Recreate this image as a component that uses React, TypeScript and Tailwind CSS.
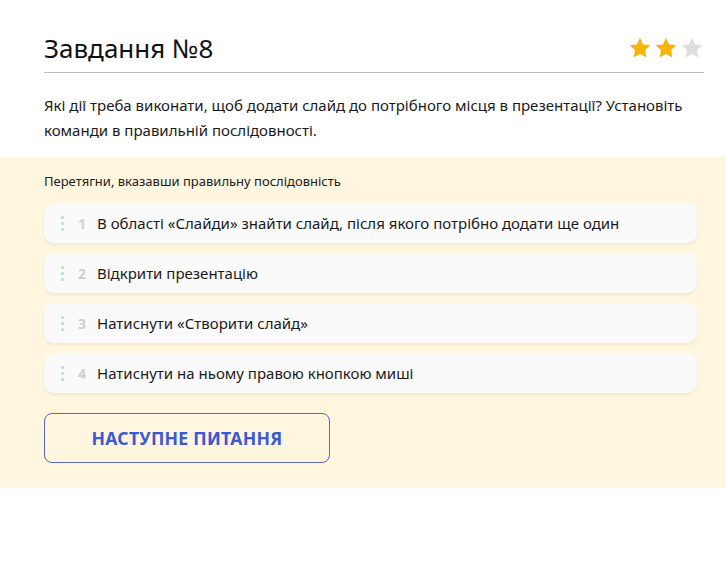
const items = [
  "В області «Слайди» знайти слайд, після якого потрібно додати ще один",
  "Відкрити презентацію",
  "Натиснути «Створити слайд»",
  "Натиснути на ньому правою кнопкою миші",
]

const Star = ({ filled }: { filled: boolean }) => (
  <svg width="24" height="24" viewBox="0 0 24 24" className={filled ? "fill-[#f5b50a]" : "fill-[#dedede]"}>
    <path d="M12 1.8l3.1 6.6 7.2.9-5.3 5 1.4 7.1L12 17.9l-6.4 3.5 1.4-7.1-5.3-5 7.2-.9z" />
  </svg>
)

const Handle = () => (
  <div className="flex flex-col gap-[3px] w-[3px]">
    <span className="w-[3px] h-[3px] rounded-full bg-[#b3e2c2]" />
    <span className="w-[3px] h-[3px] rounded-full bg-[#b3e2c2]" />
    <span className="w-[3px] h-[3px] rounded-full bg-[#b3e2c2]" />
  </div>
)

export default function App() {
  return (
    <div className="w-[726px] h-[583px] bg-white text-[#1a1a1a] font-['Noto_Sans',sans-serif]">
      <div className="px-[44px] pt-[30px]">
        <div className="flex items-center justify-between pb-[6px] border-b border-[#bdbdbd] mr-[-22px]">
          <h1 className="text-[26px] leading-[36px] text-[#111]">Завдання №8</h1>
          <div className="flex gap-[2px] items-center">
            <Star filled />
            <Star filled />
            <Star filled={false} />
          </div>
        </div>
        <p className="mt-[20px] text-[15px] leading-[25px] mr-[-30px]">
          Які дії треба виконати, щоб додати слайд до потрібного місця в презентації? Установіть команди в правильній послідовності.
        </p>
      </div>
      <div className="mt-[14px] bg-[#fef6df] px-[44px] pt-[16px] pb-[25px]">
        <div className="text-[13px] leading-[17px] mb-[13px] text-[#222]">Перетягни, вказавши правильну послідовність</div>
        <div className="flex flex-col gap-[10px] mr-[-15px]">
          {items.map((t, i) => (
            <div key={i} className="flex items-center h-[40px] rounded-[10px] bg-[#fafafa] shadow-[0_2px_3px_rgba(0,0,0,0.06)] pl-[17px]">
              <Handle />
              <span className="ml-[14px] w-[10px] text-[14px] font-bold text-[#cfcfcf]">{i + 1}</span>
              <span className="ml-[9px] text-[15px] text-[#1a1a1a]">{t}</span>
            </div>
          ))}
        </div>
        <button className="mt-[20px] w-[286px] h-[50px] rounded-[8px] border border-[#5866c4] text-[#3c58d2] font-bold text-[17.5px] tracking-[0.3px]">
          НАСТУПНЕ ПИТАННЯ
        </button>
      </div>
    </div>
  )
}
